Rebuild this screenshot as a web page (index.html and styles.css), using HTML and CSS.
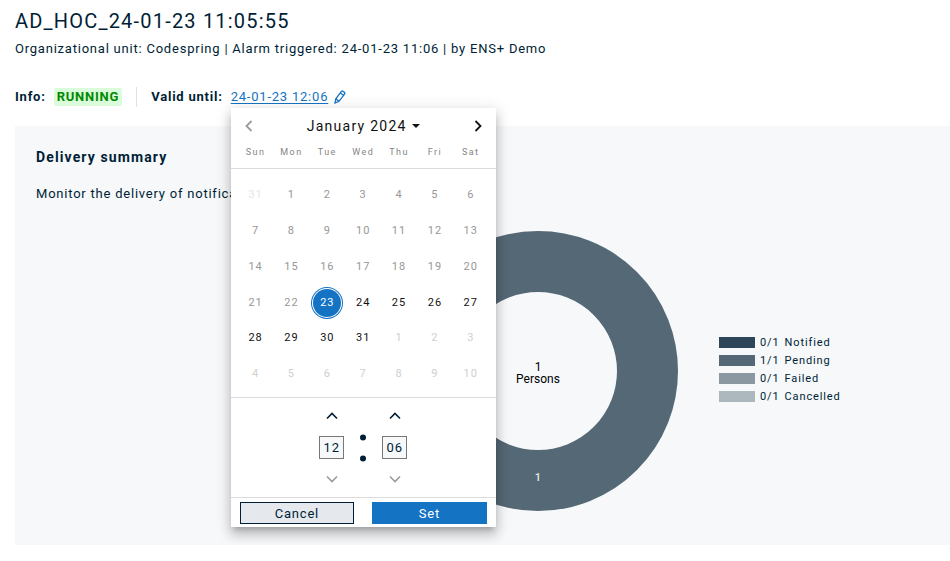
FILE: index.html
```html
<!DOCTYPE html>
<html lang="en">
<head>
<meta charset="utf-8">
<title>AD_HOC_24-01-23 11:05:55</title>
<link rel="stylesheet" href="styles.css">
</head>
<body>
<main class="page">
  <header>
    <h1 class="title">AD_HOC_24-01-23 11:05:55</h1>
    <p class="subtitle">Organizational unit: Codespring | Alarm triggered: 24-01-23 11:06 | by ENS+ Demo</p>
  </header>

  <div class="info">
    <div class="info-item info-status"><b>Info:</b><span class="status">RUNNING</span></div>
    <div class="info-item">
      <b>Valid until:</b>
      <div class="valid">
        <a class="valid-link" href="#picker">24-01-23 12:06
          <svg class="pencil" viewBox="0 0 12 14" width="12" height="14" aria-hidden="true"><path d="M1 13l.8-4.2L7.4 1.4Q8 .7 8.8 1.2l1.7 1.2q.8.6.2 1.4L5 11.300z M6.300 3l3.200 2.300M1.800 8.800l3.200 2.500"/></svg>
        </a>
        <form class="picker" id="picker" aria-label="Valid until">
          <div class="picker-head">
            <button class="nav" type="button" aria-label="Previous month" disabled><svg viewBox="0 0 8 12" width="8" height="12"><path d="M6.500 1L1.500 6l5 5"/></svg></button>
            <button class="period" type="button">January 2024<svg viewBox="0 0 8 4" width="8" height="4"><path d="M0 0h8L4 4z"/></svg></button>
            <button class="nav" type="button" aria-label="Next month"><svg viewBox="0 0 8 12" width="8" height="12"><path d="M1.500 1l5 5-5 5"/></svg></button>
          </div>
          <table class="calendar">
            <thead>
              <tr><th>Sun</th><th>Mon</th><th>Tue</th><th>Wed</th><th>Thu</th><th>Fri</th><th>Sat</th></tr>
            </thead>
            <tbody>
              <tr class="past"><td class="faint"><button type="button" disabled>31</button></td><td><button type="button" disabled>1</button></td><td><button type="button" disabled>2</button></td><td><button type="button" disabled>3</button></td><td><button type="button" disabled>4</button></td><td><button type="button" disabled>5</button></td><td><button type="button" disabled>6</button></td></tr>
              <tr class="past"><td><button type="button" disabled>7</button></td><td><button type="button" disabled>8</button></td><td><button type="button" disabled>9</button></td><td><button type="button" disabled>10</button></td><td><button type="button" disabled>11</button></td><td><button type="button" disabled>12</button></td><td><button type="button" disabled>13</button></td></tr>
              <tr class="past"><td><button type="button" disabled>14</button></td><td><button type="button" disabled>15</button></td><td><button type="button" disabled>16</button></td><td><button type="button" disabled>17</button></td><td><button type="button" disabled>18</button></td><td><button type="button" disabled>19</button></td><td><button type="button" disabled>20</button></td></tr>
              <tr><td class="past"><button type="button" disabled>21</button></td><td class="past"><button type="button" disabled>22</button></td><td class="selected"><button type="button">23</button></td><td><button type="button">24</button></td><td><button type="button">25</button></td><td><button type="button">26</button></td><td><button type="button">27</button></td></tr>
              <tr><td><button type="button">28</button></td><td><button type="button">29</button></td><td><button type="button">30</button></td><td><button type="button">31</button></td><td class="next"><button type="button">1</button></td><td class="next"><button type="button">2</button></td><td class="next"><button type="button">3</button></td></tr>
              <tr class="next"><td><button type="button">4</button></td><td><button type="button">5</button></td><td><button type="button">6</button></td><td><button type="button">7</button></td><td><button type="button">8</button></td><td><button type="button">9</button></td><td><button type="button">10</button></td></tr>
            </tbody>
          </table>
          <div class="time">
            <div class="spinner">
              <button class="step" type="button" aria-label="Later hour"><svg viewBox="0 0 12 8" width="12" height="8"><path d="M1 6.500l5-5 5 5"/></svg></button>
              <input type="text" aria-label="Hours" value="12">
              <button class="step" type="button" aria-label="Earlier hour" disabled><svg viewBox="0 0 12 8" width="12" height="8"><path d="M1 1.500l5 5 5-5"/></svg></button>
            </div>
            <svg class="colon" viewBox="0 0 6 28" width="6" height="28" aria-hidden="true"><circle cx="3" cy="3.500" r="3"/><circle cx="3" cy="24.500" r="3"/></svg>
            <div class="spinner">
              <button class="step" type="button" aria-label="Later minute"><svg viewBox="0 0 12 8" width="12" height="8"><path d="M1 6.500l5-5 5 5"/></svg></button>
              <input type="text" aria-label="Minutes" value="06">
              <button class="step" type="button" aria-label="Earlier minute" disabled><svg viewBox="0 0 12 8" width="12" height="8"><path d="M1 1.500l5 5 5-5"/></svg></button>
            </div>
          </div>
          <div class="actions">
            <button class="action" type="button">Cancel</button>
            <button class="action primary" type="button">Set</button>
          </div>
        </form>
      </div>
    </div>
  </div>

  <section class="card">
    <h2 class="card-title">Delivery summary</h2>
    <p class="card-text">Monitor the delivery of notifications</p>
    <div class="chart">
      <svg class="donut" viewBox="0 0 280 280" width="280" height="280" role="img" aria-label="1 of 1 persons pending">
        <circle cx="140" cy="140" r="109.500"/>
        <text x="140" y="140">1</text>
        <text x="140" y="152">Persons</text>
        <text class="value" x="140" y="250">1</text>
      </svg>
      <ul class="legend">
        <li><span class="swatch notified"></span><span>0/1</span><span>Notified</span></li>
        <li><span class="swatch pending"></span><span>1/1</span><span>Pending</span></li>
        <li><span class="swatch failed"></span><span>0/1</span><span>Failed</span></li>
        <li><span class="swatch cancelled"></span><span>0/1</span><span>Cancelled</span></li>
      </ul>
    </div>
  </section>
</main>
</body>
</html>
```
FILE: styles.css
```css
* { box-sizing: border-box; letter-spacing: inherit; }

body {
  margin: 0;
  background: #fff;
  color: #001e36;
  font: 13px/20px Roboto, sans-serif;
  letter-spacing: 0.06em;
}

h1, h2, p, ul { margin: 0; padding: 0; }
button, input { font: inherit; color: inherit; padding: 0; }
button { border: 0; background: none; }
svg { fill: none; stroke: currentColor; }

.page { padding: 8px 0 16px 15px; }
.title { font-size: 20px; line-height: 26px; font-weight: 400; letter-spacing: 0.06em; }
.subtitle { margin-top: 5px; }

.info { display: flex; margin-top: 28px; }
.info-item { display: flex; align-items: center; gap: 8px; }
.info-status { padding-right: 14px; margin-right: 14px; border-right: 1px solid #e0e2e5; }
.status {
  padding: 0 3px;
  border-radius: 2px;
  background: #dbfcdb;
  color: #008a00;
  font-weight: 700;
  line-height: 18px;
}
.valid { position: relative; }
.valid-link { color: #1573c4; text-underline-offset: 2px; display: flex; align-items: center; gap: 6px; text-decoration: underline; }
.pencil { stroke-width: 1.3; }

.picker {
  position: absolute;
  z-index: 2;
  top: 21px;
  left: 0;
  width: 265px;
  background: #fff;
  box-shadow: 0 5px 5px -3px rgba(0, 0, 0, .2), 0 8px 10px 1px rgba(0, 0, 0, .14), 0 3px 14px 2px rgba(0, 0, 0, .12);
}
.picker-head { display: flex; justify-content: space-between; padding: 8px 7px 0; color: #111; }
.nav, .period { height: 20px; }
.nav { width: 22px; display: grid; place-items: center; }
.nav svg { stroke-width: 1.8; }
.nav:disabled, .step:disabled { color: #9b9b9b; }
.period { display: flex; align-items: center; gap: 5px; font-size: 14px; letter-spacing: 0.09em; }
.period svg { fill: currentColor; stroke: none; }

.calendar { width: 100%; border-spacing: 0; table-layout: fixed; font-size: 11px; letter-spacing: 0.09em; }
.calendar thead, .calendar tbody { display: block; padding: 0 7px; }
.calendar thead { border-bottom: 1px solid #dcdcdc; }
.calendar tbody { padding-top: 8px; padding-bottom: 5px; }
.calendar tr { display: grid; grid-template-columns: repeat(7, 1fr); }
.calendar th { padding: 6px 0; font-size: 9px; font-weight: 400; color: #858585; letter-spacing: 0.16em; }
.calendar td { display: grid; place-items: center; padding: 0; aspect-ratio: 1; color: #111; }
.calendar td button { width: 28px; height: 28px; border-radius: 50%; }
.calendar .past, .past td { color: #979797; }
.calendar .next, .next td { color: #cfcfcf; }
.calendar .faint { color: #e6e6e6; }
.calendar .selected button { background: #1573c4; color: #fff; box-shadow: 0 0 0 1px #fff, 0 0 0 2px #1573c4; }

.time {
  display: flex;
  justify-content: center;
  align-items: center;
  gap: 16px;
  padding: 8px 0;
  border: solid #dcdcdc;
  border-width: 1px 0;
}
.spinner { display: flex; flex-direction: column; align-items: center; gap: 10px; }
.step { width: 20px; height: 20px; display: grid; place-items: center; }
.step svg { stroke-width: 1.6; }
.spinner input { width: 25px; height: 23px; border: 1px solid #777; background: #f6f8fa; text-align: center; }
.colon { fill: currentColor; stroke: none; }

.actions { display: flex; gap: 18px; padding: 4px 9px 3px; }
.action { flex: 1; height: 22px; padding-top: 1px; border: 1px solid #001e36; background: #e5e8ec; }
.primary { border-color: #1573c4; background: #1573c4; color: #fff; }

.card { margin-top: 19px; padding: 21px 21px 34px; background: #f6f8fa; }
.card-title { font-size: 14px; line-height: 20px; font-weight: 700; letter-spacing: 0.08em; }
.card-text { margin-top: 17px; }
.chart { display: flex; align-items: center; gap: 41px; margin: 27px 0 0 362px; }
.donut { flex: none; letter-spacing: 0; font-size: 12px; text-anchor: middle; }
.donut circle { stroke: #556875; stroke-width: 61; }
.donut text { stroke: none; fill: #000; }
.donut .value { fill: #e4e8eb; font-size: 11px; font-weight: 500; }
.legend { padding-bottom: 3px; list-style: none; font-size: 11px; line-height: 18px; letter-spacing: 0.08em; }
.legend li { display: flex; align-items: center; gap: 5px; }
.swatch { width: 36px; height: 11px; }
.notified { background: #2f4558; }
.pending { background: #556875; }
.failed { background: #8b98a2; }
.cancelled { background: #adb8be; }
```
